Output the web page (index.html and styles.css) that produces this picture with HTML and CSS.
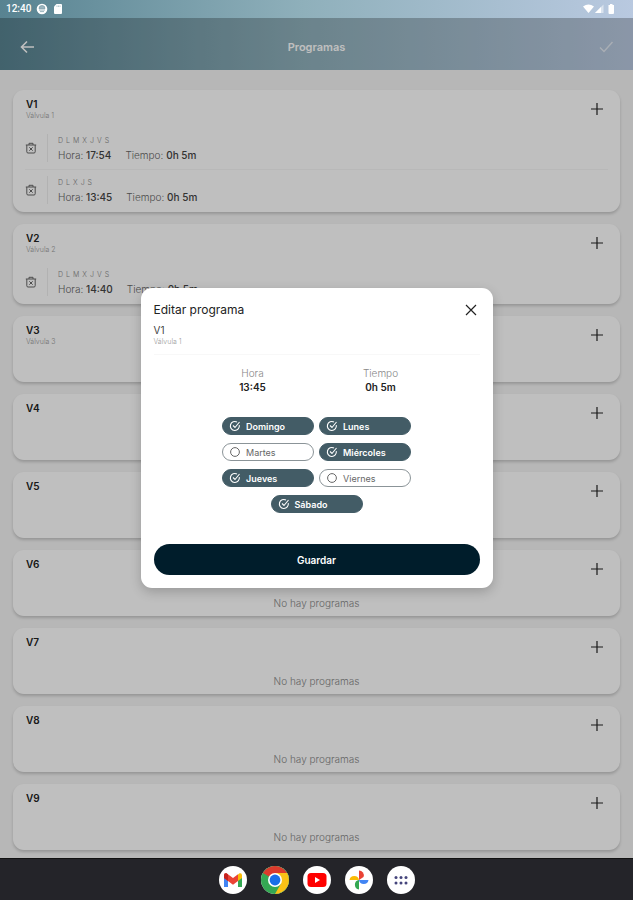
FILE: index.html
```html
<!DOCTYPE html>
<html lang="es">
<head>
    <meta charset="UTF-8">
    <meta name="viewport" content="width=device-width, initial-scale=1.0">
    <title>Programas</title>
    <link rel="stylesheet" href="styles.css">
</head>
<body>
    <svg class="sprite" aria-hidden="true">
        <symbol id="plus" viewBox="0 0 14 14"><path d="M7 1v12M1 7h12" fill="none" stroke="currentColor" stroke-width="1.2"/></symbol>
        <symbol id="trash" viewBox="0 0 12 12"><path d="M.8 3h10.400M4 3V1.300h4V3M1.800 3v6.800q0 1.200 1.200 1.200h6q1.200 0 1.200-1.200V3M4.300 5.300l3.400 3.400M7.700 5.300l-3.400 3.400" fill="none" stroke="currentColor" stroke-width="1"/></symbol>
        <symbol id="checked" viewBox="0 0 12 12"><path d="M10.300 5.200A4.500 4.500 0 1 1 8 2M4 5.500l2 2L10.500 2" fill="none" stroke="currentColor" stroke-width="1.100"/></symbol>
        <symbol id="unchecked" viewBox="0 0 12 12"><circle cx="6" cy="6" r="4.400" fill="none" stroke="currentColor"/></symbol>
    </svg>

    <div class="top">
        <div class="status-bar">
            <span class="clock">12:40</span>
            <svg width="12" height="12" viewBox="0 0 12 12"><circle cx="6" cy="6" r="5.300" fill="#fff"/><path d="M3 5.500a3 3 0 0 1 6 0zM3 7h6M4 8.600h4" fill="#9bb4be" stroke="#7f9fab" stroke-width=".8"/></svg>
            <svg width="10" height="12" viewBox="0 0 10 12"><path d="M3.500 1H8q1 0 1 1v8q0 1-1 1H2q-1 0-1-1V3.500z" fill="#fff"/><path d="M4 2.500v1.500M5.500 2.500v1.500M7 2.500v1.500" stroke="#8aa9b4" stroke-width=".6"/></svg>
            <svg class="signals" width="34" height="12" viewBox="0 0 34 12"><path d="M0 3.500q5.500-4 11 0L5.500 10z" fill="#fff"/><path d="M20.500 1.500v8.500h-8.500z" fill="#fff" opacity=".5"/><path d="M18 4v6h-6z" fill="#fff"/><path d="M27 1h2.500v1H31v8q0 1-1 1h-3.500q-1 0-1-1V2H27z" fill="#fff"/></svg>
        </div>
        <header class="header">
            <button class="icon-btn" aria-label="Volver"><svg width="16" height="16" viewBox="0 0 16 16"><path d="M15 8H2.500M8 2.500L2.500 8 8 13.500" fill="none" stroke="#fff" stroke-width="1.600"/></svg></button>
            <h1>Programas</h1>
            <button class="icon-btn confirm" aria-label="Confirmar"><svg width="16" height="16" viewBox="0 0 16 16"><path d="M2 8.500l4 4L14.500 3" fill="none" stroke="#fff" stroke-width="1.400"/></svg></button>
        </header>
    </div>

    <main class="valves">
        <section class="card">
            <div class="card-head">
                <div><h2>V1</h2><p>Válvula 1</p></div>
                <button class="icon-btn" aria-label="Añadir programa"><svg width="14" height="14"><use href="#plus"/></svg></button>
            </div>
            <div class="program">
                <button class="icon-btn" aria-label="Eliminar"><svg width="12" height="12"><use href="#trash"/></svg></button>
                <div class="program-info">
                    <div class="days"><span>D</span><span>L</span><span>M</span><span>X</span><span>J</span><span>V</span><span>S</span></div>
                    <div class="times"><span>Hora: <b>17:54</b></span><span>Tiempo: <b>0h 5m</b></span></div>
                </div>
            </div>
            <div class="program">
                <button class="icon-btn" aria-label="Eliminar"><svg width="12" height="12"><use href="#trash"/></svg></button>
                <div class="program-info">
                    <div class="days"><span>D</span><span>L</span><span>X</span><span>J</span><span>S</span></div>
                    <div class="times"><span>Hora: <b>13:45</b></span><span>Tiempo: <b>0h 5m</b></span></div>
                </div>
            </div>
        </section>
        <section class="card">
            <div class="card-head">
                <div><h2>V2</h2><p>Válvula 2</p></div>
                <button class="icon-btn" aria-label="Añadir programa"><svg width="14" height="14"><use href="#plus"/></svg></button>
            </div>
            <div class="program">
                <button class="icon-btn" aria-label="Eliminar"><svg width="12" height="12"><use href="#trash"/></svg></button>
                <div class="program-info">
                    <div class="days"><span>D</span><span>L</span><span>M</span><span>X</span><span>J</span><span>V</span><span>S</span></div>
                    <div class="times"><span>Hora: <b>14:40</b></span><span>Tiempo: <b>0h 5m</b></span></div>
                </div>
            </div>
        </section>
        <section class="card">
            <div class="card-head">
                <div><h2>V3</h2><p>Válvula 3</p></div>
                <button class="icon-btn" aria-label="Añadir programa"><svg width="14" height="14"><use href="#plus"/></svg></button>
            </div>
            <p class="empty">No hay programas</p>
        </section>
        <section class="card">
            <div class="card-head">
                <h2>V4</h2>
                <button class="icon-btn" aria-label="Añadir programa"><svg width="14" height="14"><use href="#plus"/></svg></button>
            </div>
            <p class="empty">No hay programas</p>
        </section>
        <section class="card">
            <div class="card-head">
                <h2>V5</h2>
                <button class="icon-btn" aria-label="Añadir programa"><svg width="14" height="14"><use href="#plus"/></svg></button>
            </div>
            <p class="empty">No hay programas</p>
        </section>
        <section class="card">
            <div class="card-head">
                <h2>V6</h2>
                <button class="icon-btn" aria-label="Añadir programa"><svg width="14" height="14"><use href="#plus"/></svg></button>
            </div>
            <p class="empty">No hay programas</p>
        </section>
        <section class="card">
            <div class="card-head">
                <h2>V7</h2>
                <button class="icon-btn" aria-label="Añadir programa"><svg width="14" height="14"><use href="#plus"/></svg></button>
            </div>
            <p class="empty">No hay programas</p>
        </section>
        <section class="card">
            <div class="card-head">
                <h2>V8</h2>
                <button class="icon-btn" aria-label="Añadir programa"><svg width="14" height="14"><use href="#plus"/></svg></button>
            </div>
            <p class="empty">No hay programas</p>
        </section>
        <section class="card">
            <div class="card-head">
                <h2>V9</h2>
                <button class="icon-btn" aria-label="Añadir programa"><svg width="14" height="14"><use href="#plus"/></svg></button>
            </div>
            <p class="empty">No hay programas</p>
        </section>
    </main>

    <!-- Edit dialog -->
    <div class="overlay">
        <form class="modal" role="dialog" aria-labelledby="modal-title">
            <div class="modal-head">
                <h2 id="modal-title">Editar programa</h2>
                <button type="button" class="icon-btn" aria-label="Cerrar"><svg width="14" height="14" viewBox="0 0 14 14"><path d="M2 2l10 10M12 2L2 12" fill="none" stroke="#222" stroke-width="1.200"/></svg></button>
            </div>
            <div class="modal-valve">
                <h3>V1</h3>
                <p>Válvula 1</p>
            </div>
            <div class="modal-times">
                <div><span>Hora</span><b>13:45</b></div>
                <div><span>Tiempo</span><b>0h 5m</b></div>
            </div>
            <div class="day-picker">
                <label class="day"><input type="checkbox" checked><svg class="on"><use href="#checked"/></svg><svg class="off"><use href="#unchecked"/></svg>Domingo</label>
                <label class="day"><input type="checkbox" checked><svg class="on"><use href="#checked"/></svg><svg class="off"><use href="#unchecked"/></svg>Lunes</label>
                <label class="day"><input type="checkbox"><svg class="on"><use href="#checked"/></svg><svg class="off"><use href="#unchecked"/></svg>Martes</label>
                <label class="day"><input type="checkbox" checked><svg class="on"><use href="#checked"/></svg><svg class="off"><use href="#unchecked"/></svg>Miércoles</label>
                <label class="day"><input type="checkbox" checked><svg class="on"><use href="#checked"/></svg><svg class="off"><use href="#unchecked"/></svg>Jueves</label>
                <label class="day"><input type="checkbox"><svg class="on"><use href="#checked"/></svg><svg class="off"><use href="#unchecked"/></svg>Viernes</label>
                <label class="day"><input type="checkbox" checked><svg class="on"><use href="#checked"/></svg><svg class="off"><use href="#unchecked"/></svg>Sábado</label>
            </div>
            <button type="submit" class="save">Guardar</button>
        </form>
    </div>

    <nav class="taskbar">
        <button aria-label="Gmail"><svg viewBox="0 0 28 28"><path d="M5 9v12h4V12z" fill="#4285f4"/><path d="M23 9v12h-4V12z" fill="#34a853"/><path d="M19 8.500l1.500-1.200Q23 6.500 23 9.500V12l-4 3z" fill="#fbbc04"/><path d="M5 9.500Q5 6.500 7.500 7.300L14 12l5-3.700V15l-5 3.700L9 15l-4-3z" fill="#ea4335"/><path d="M5 9.500Q5 6.500 7.500 7.300L9 8.500V15l-4-3z" fill="#c5221f"/></svg></button>
        <button aria-label="Chrome"><svg viewBox="0 0 28 28"><circle cx="14" cy="14" r="14" fill="#34a853"/><path d="M14 14L1.900 7A14 14 0 0 1 26.100 7z" fill="#dc3a2c"/><path d="M14 7h12.100A14 14 0 0 1 14 28l6-10.500z" fill="#fbc116"/><circle cx="14" cy="14" r="7" fill="#fff"/><circle cx="14" cy="14" r="5.400" fill="#1a6fe8"/></svg></button>
        <button aria-label="YouTube"><svg viewBox="0 0 28 28"><rect x="4.500" y="7" width="19" height="14" rx="3.500" fill="#f00"/><path d="M12 11v6l5-3z" fill="#fff"/></svg></button>
        <button aria-label="Fotos"><svg viewBox="0 0 28 28"><path d="M14 14V4.500a4.800 4.800 0 0 1 4.500 6.500L14 14z" fill="#ea4335"/><path d="M14 14h9.500a4.800 4.800 0 0 1-9.500 0z" fill="#4285f4"/><path d="M14 14v9.500a4.800 4.800 0 0 1 0-9.500z" fill="#34a853"/><path d="M14 14H4.500a4.800 4.800 0 0 1 9.500 0z" fill="#fbbc04"/></svg></button>
        <button aria-label="Aplicaciones"><svg viewBox="0 0 28 28" fill="#45457c"><circle cx="9" cy="11.500" r="1.500"/><circle cx="14" cy="11.500" r="1.500"/><circle cx="19" cy="11.500" r="1.500"/><circle cx="9" cy="17" r="1.500"/><circle cx="14" cy="17" r="1.500"/><circle cx="19" cy="17" r="1.500"/></svg></button>
    </nav>
</body>
</html>
```
FILE: styles.css
```css
* {
    box-sizing: border-box;
}

body {
    margin: 0;
    min-height: 100vh;
    display: flex;
    flex-direction: column;
    position: relative;
    font-family: Inter, 'Open Sans', sans-serif;
    font-size: 10px;
    background-color: #f4f4f4;
    color: #222;
}

h1, h2, h3, p {
    margin: 0;
}

svg {
    display: block;
}

button {
    font-family: inherit;
    border: none;
    cursor: pointer;
}

.sprite {
    position: absolute;
    width: 0;
    height: 0;
}

.icon-btn {
    display: flex;
    padding: 0;
    background: none;
    color: inherit;
}

.top {
    background: linear-gradient(to right, #588391, #8fb0bb 48%, #b9c9e0);
    color: #fff;
}

.status-bar {
    height: 18px;
    display: flex;
    align-items: center;
    gap: 5px;
    padding: 0 16px 0 6px;
}

.clock {
    font: 500 10px/18px Roboto, sans-serif;
}

.signals {
    margin-left: auto;
}

.header {
    height: 52px;
    display: flex;
    align-items: center;
    justify-content: space-between;
    padding: 6px 19px 0;
}

.header h1 {
    font-size: 11px;
    line-height: 16px;
    font-weight: 600;
}

.confirm {
    opacity: 0.6;
}

.valves {
    flex: 1;
    display: flex;
    flex-direction: column;
    gap: 12px;
    padding: 20px 13px 8px;
}

.card {
    background-color: #fff;
    border-radius: 11px;
    padding: 0 12px;
    box-shadow: 0 2px 3px rgba(0, 0, 0, 0.18);
}

.card-head {
    height: 38px;
    display: flex;
    align-items: flex-start;
    justify-content: space-between;
    padding: 8px 4px 0 1px;
}

.card-head h2 {
    font-size: 10px;
    line-height: 12px;
    font-weight: 600;
}

.card-head p,
.modal-valve p {
    font-size: 7px;
    line-height: 12px;
    font-weight: 300;
    color: #999;
}

.card-head .icon-btn {
    margin-top: 4px;
}

.program {
    display: flex;
    align-items: center;
    gap: 10px;
    padding: 6px 0 7px;
    color: #666;
}

.program + .program {
    border-top: 1px solid #f6f6f6;
}

.program:last-child {
    margin-bottom: 1px;
}

.program-info {
    border-left: 1px solid #eee;
    padding-left: 10px;
}

.days {
    display: flex;
    gap: 3px;
    font-size: 7px;
    line-height: 14px;
    font-weight: 300;
    color: #888;
}

.times {
    display: flex;
    gap: 14px;
    font-size: 10px;
    line-height: 14px;
    font-weight: 300;
}

.times b {
    font-weight: 500;
    color: #444;
}

.empty {
    padding: 8px 0 6px;
    text-align: center;
    font-size: 10px;
    line-height: 14px;
    font-weight: 300;
    color: #888;
}

.overlay {
    position: absolute;
    top: 18px;
    right: 0;
    bottom: 42px;
    left: 0;
    display: flex;
    align-items: center;
    justify-content: center;
    background-color: rgba(0, 0, 0, 0.25);
}

.modal {
    width: 352px;
    max-width: 90%;
    padding: 13px;
    background-color: #fff;
    border-radius: 11px;
    box-shadow: 0 4px 12px rgba(0, 0, 0, 0.2);
}

.modal-head {
    display: flex;
    align-items: center;
    justify-content: space-between;
    padding-right: 2px;
}

.modal-head h2 {
    font-size: 12px;
    line-height: 18px;
    font-weight: 400;
}

.modal-valve {
    padding: 5px 0 6px;
    border-bottom: 1px solid #f8f8f8;
}

.modal-valve h3 {
    font-size: 10px;
    line-height: 12px;
    font-weight: 400;
    color: #444;
}

.modal-times {
    display: flex;
    justify-content: center;
    padding: 11px 0 23px;
}

.modal-times div {
    width: 128px;
    display: flex;
    flex-direction: column;
    align-items: center;
    line-height: 14px;
}

.modal-times span {
    font-weight: 300;
    color: #888;
}

.modal-times b {
    font-weight: 600;
}

.day-picker {
    width: 200px;
    margin: 0 auto 31px;
    display: flex;
    flex-wrap: wrap;
    justify-content: center;
    gap: 8px 5px;
}

.day {
    position: relative;
    width: 92px;
    height: 18px;
    display: flex;
    align-items: center;
    gap: 5px;
    padding-left: 6px;
    border: 1px solid #8b9498;
    border-radius: 9px;
    font-size: 9px;
    color: #666;
    cursor: pointer;
}

.day input {
    position: absolute;
    inset: 0;
    margin: 0;
    opacity: 0;
}

.day svg {
    width: 12px;
    height: 12px;
}

.day .on {
    display: none;
}

.day:has(input:checked) {
    background-color: #435c66;
    border-color: #435c66;
    color: #fff;
    font-weight: 600;
}

.day:has(input:checked) .on {
    display: block;
}

.day:has(input:checked) .off {
    display: none;
}

.save {
    width: 100%;
    height: 31px;
    border-radius: 16px;
    background-color: #001d2b;
    color: #fff;
    font-size: 10px;
    font-weight: 600;
}

.taskbar {
    height: 42px;
    display: flex;
    align-items: center;
    justify-content: center;
    gap: 14px;
    background-color: #242429;
    border-top: 1px solid #111;
}

.taskbar button {
    width: 28px;
    height: 28px;
    padding: 0;
    border-radius: 50%;
    background-color: #fff;
}
```
